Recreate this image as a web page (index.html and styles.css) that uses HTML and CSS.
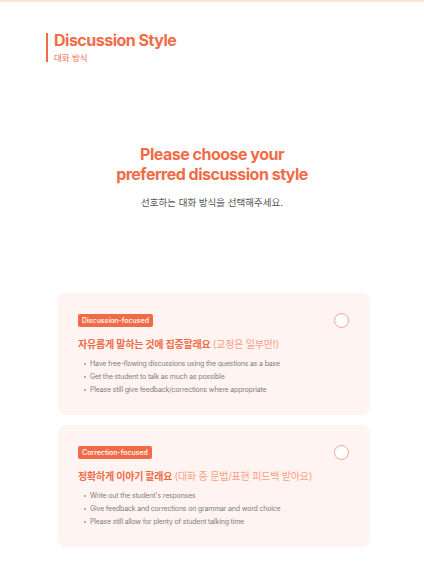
FILE: index.html
```html
<!DOCTYPE html>
<html lang="ko">
<head>
    <meta charset="UTF-8">
    <meta name="viewport" content="width=device-width, initial-scale=1.0">
    <title>Discussion Style</title>
    <link rel="stylesheet" href="styles.css">
</head>
<body>

    <div class="top-line"></div>

    <!-- Page header -->
    <div class="page-header">
        <div class="page-title">Discussion Style</div>
        <div class="page-sub">대화 방식</div>
    </div>

    <div class="intro">
        <h1>Please choose your<br>preferred discussion style</h1>
        <p>선호하는 대화 방식을 선택해주세요.</p>
    </div>

    <div class="options">
        <div class="option-card">
            <div class="card-top">
                <span class="badge">Discussion-focused</span>
                <span class="radio"></span>
            </div>
            <div class="card-title">자유롭게 말하는 것에 집중할래요 <span class="card-note">(교정은 일부만!)</span></div>
            <ul class="card-list">
                <li>Have free-flowing discussions using the questions as a base</li>
                <li>Get the student to talk as much as possible</li>
                <li>Please still give feedback/corrections where appropriate</li>
            </ul>
        </div>

        <div class="option-card">
            <div class="card-top">
                <span class="badge">Correction-focused</span>
                <span class="radio"></span>
            </div>
            <div class="card-title">정확하게 이야기 할래요 <span class="card-note">(대화 중 문법/표현 피드백 받아요)</span></div>
            <ul class="card-list">
                <li>Write out the student's responses</li>
                <li>Give feedback and corrections on grammar and word choice</li>
                <li>Please still allow for plenty of student talking time</li>
            </ul>
        </div>
    </div>

</body>
</html>
```

FILE: styles.css
```css
body {
    margin: 0;
    font-family: Inter, "Noto Sans CJK KR", sans-serif;
    background: #ffffff;
    color: #333333;
}

.top-line {
    height: 2px;
    background: #fde2d8;
}

.page-header {
    margin: 31px 0 0 46px;
    padding-left: 6px;
    border-left: 2px solid #f26b47;
    height: 29px;
}

.page-title {
    font-size: 16px;
    line-height: 14px;
    font-weight: 700;
    letter-spacing: -0.5px;
    color: #f26b47;
}

.page-sub {
    margin-top: 6px;
    font-size: 8.5px;
    line-height: 10px;
    color: #f26b47;
}

.intro {
    text-align: center;
    margin-top: 82px;
}

.intro h1 {
    margin: 0;
    font-size: 16px;
    line-height: 20px;
    font-weight: 700;
    letter-spacing: -0.5px;
    color: #f26b47;
}

.intro p {
    margin: 12px 0 0;
    font-size: 9.5px;
    line-height: 14px;
    color: #555555;
}

.options {
    margin: 83px 0 0 58px;
    width: 312px;
    display: flex;
    flex-direction: column;
    gap: 10px;
}

.option-card {
    background: #fff4f1;
    border-radius: 8px;
    padding: 19px 21px 19px 20px;
}

.card-top {
    display: flex;
    align-items: center;
    justify-content: space-between;
    height: 16px;
}

.badge {
    background: #f26b47;
    color: #ffffff;
    font-size: 7px;
    font-weight: 500;
    line-height: 13px;
    padding: 0 4px;
    border-radius: 2px;
}

.radio {
    width: 13px;
    height: 13px;
    border: 1.5px solid #f8a489;
    border-radius: 50%;
    background: #ffffff;
}

.card-title {
    margin-top: 9px;
    font-size: 10px;
    line-height: 14px;
    font-weight: 700;
    letter-spacing: -0.2px;
    color: #f26b47;
}

.card-note {
    font-weight: 400;
    color: #f8a084;
}

.card-list {
    list-style: none;
    margin: 6px 0 0;
    padding: 0;
}

.card-list li {
    position: relative;
    padding-left: 12px;
    font-size: 7px;
    line-height: 13px;
    letter-spacing: -0.18px;
    color: #808080;
}

.card-list li::before {
    content: "";
    position: absolute;
    left: 6px;
    top: 6px;
    width: 2px;
    height: 2px;
    border-radius: 50%;
    background: #999999;
}
```
